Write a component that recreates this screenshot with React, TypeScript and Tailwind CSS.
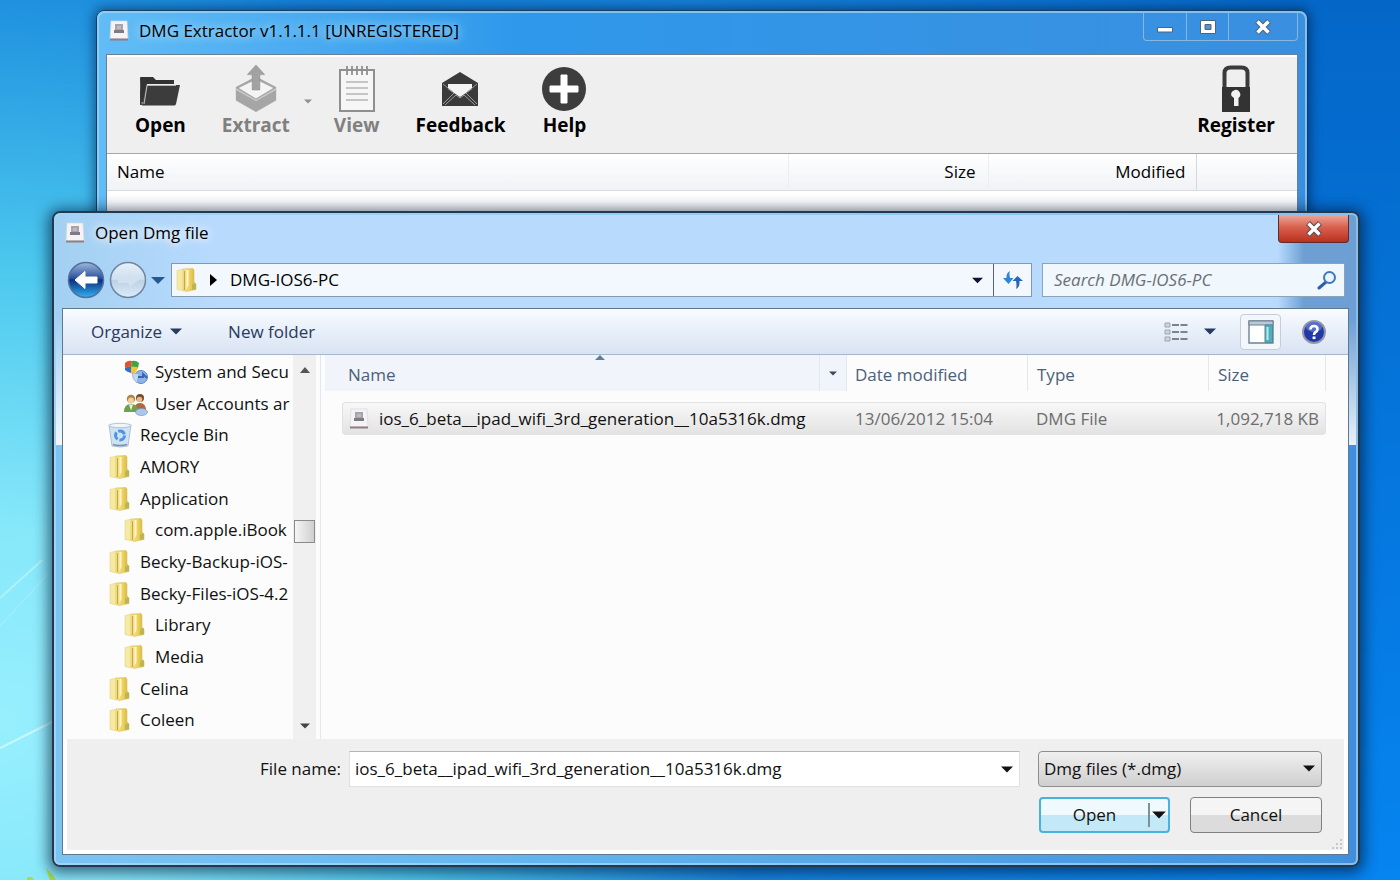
import type { ReactNode } from 'react';

interface TreeItem {
  label: string;
  level: 1 | 2;
  icon: 'folder' | 'system' | 'users' | 'bin';
}

const TREE: TreeItem[] = [
  { label: 'System and Secu', level: 2, icon: 'system' },
  { label: 'User Accounts ar', level: 2, icon: 'users' },
  { label: 'Recycle Bin', level: 1, icon: 'bin' },
  { label: 'AMORY', level: 1, icon: 'folder' },
  { label: 'Application', level: 1, icon: 'folder' },
  { label: 'com.apple.iBook', level: 2, icon: 'folder' },
  { label: 'Becky-Backup-iOS-', level: 1, icon: 'folder' },
  { label: 'Becky-Files-iOS-4.2', level: 1, icon: 'folder' },
  { label: 'Library', level: 2, icon: 'folder' },
  { label: 'Media', level: 2, icon: 'folder' },
  { label: 'Celina', level: 1, icon: 'folder' },
  { label: 'Coleen', level: 1, icon: 'folder' },
];

const FILE_NAME = 'ios_6_beta__ipad_wifi_3rd_generation__10a5316k.dmg';

function DmgIcon() {
  return (
    <svg viewBox="0 0 20 22" className="w-5 h-[22px] shrink-0">
      <path d="M2 1h16l1 18H1z" fill="#f5f3f3" stroke="#d9d9dc" strokeWidth="0.7" />
      <path d="M6 4h8v6H6z" fill="#a4a4ad" />
      <path d="M5 10h10v3H5z" fill="#7b7b88" />
      <path d="M8 6h4v3H8z" fill="#c9b6b8" />
      <path d="M1 18.5h18v2H1z" fill="#8d7f82" />
    </svg>
  );
}

function FolderIcon() {
  return (
    <svg viewBox="0 0 22 26" className="w-[22px] h-[26px] shrink-0">
      <defs>
        <linearGradient id="folderFront" x1="0" x2="1">
          <stop offset="0" stopColor="#f7e793" />
          <stop offset="0.55" stopColor="#ecd05c" />
          <stop offset="1" stopColor="#d6b13c" />
        </linearGradient>
      </defs>
      <path d="M2 3.5 L9 2 L9 24 L2 22.5z" fill="#f6e9a2" stroke="#e3d48c" strokeWidth="0.6" />
      <path d="M8 2 L18 1.5 L19 3 L19 15 L21 17 L21 22.5 L11 24.5 L8 23z" fill="url(#folderFront)" stroke="#d9c15c" strokeWidth="0.6" />
      <path d="M11.5 3 L13.500 3 L13.5 18 L11.5 22z" fill="#fdf6cf" />
      <path d="M9.5 4v19" stroke="#c9a640" strokeWidth="1" />
      <path d="M17 17.5l4-1v5.500l-4 1z" fill="#b9b658" />
    </svg>
  );
}

function SystemIcon() {
  return (
    <svg viewBox="0 0 26 26" className="w-[26px] h-[26px] shrink-0">
      <path d="M2 4 Q5 1 9 2 L8 8 Q5 7 2 9z" fill="#e2522c" />
      <path d="M9 2 Q13 1 16 4 L15 9 Q12 7 8 8z" fill="#3fa53a" />
      <path d="M2 9 Q5 7 8 8 L8 14 Q4 13 2 11z" fill="#2e6fd0" />
      <path d="M8 8 Q12 7 15 9 L13 13 Q10 15 8 14z" fill="#f2c62c" />
      <circle cx="18" cy="18" r="6.5" fill="#8fb4e6" stroke="#5d86c6" />
      <path d="M9 14 l7 1 l-2 9 q-5-4-5-10z" fill="#c6d7ee" stroke="#8aa8d2" strokeWidth="0.7" />
      <path d="M15 18h5v-3l4 4" fill="none" stroke="#3563b8" strokeWidth="1.8" />
    </svg>
  );
}

function UsersIcon() {
  return (
    <svg viewBox="0 0 26 26" className="w-[26px] h-[26px] shrink-0">
      <circle cx="17" cy="7" r="4" fill="#7b4a2a" />
      <circle cx="16.5" cy="8.5" r="2.8" fill="#e9b98b" />
      <path d="M11 20q0-8 6-8t6 8z" fill="#b2673c" />
      <circle cx="8" cy="8" r="4.2" fill="#a98547" />
      <circle cx="8" cy="9.5" r="3" fill="#f1cda4" />
      <path d="M1 21q0-8 7-8t7 8z" fill="#6fa04c" />
      <path d="M6 13.5l2 6 2-6z" fill="#eef2e4" />
      <ellipse cx="18.5" cy="21" rx="6" ry="3.5" fill="#a9c9ea" stroke="#6f97c6" strokeWidth="0.7" />
    </svg>
  );
}

function BinIcon() {
  return (
    <svg viewBox="0 0 24 26" className="w-6 h-[26px] shrink-0">
      <path d="M1 3h22l-3 21q-8 2-16 0z" fill="#cfe2f3" stroke="#9fb6cc" strokeWidth="0.8" />
      <ellipse cx="12" cy="3.5" rx="11" ry="2.2" fill="#eef5fb" stroke="#a5b7ca" strokeWidth="0.8" />
      <circle cx="12" cy="13.5" r="4.5" fill="none" stroke="#4f93df" strokeWidth="3" strokeDasharray="7.500 1.900" />
      <path d="M5 22.500q7 2 14 0" fill="none" stroke="#7892ad" strokeWidth="1.5" />
    </svg>
  );
}

const TREE_ICONS: Record<TreeItem['icon'], ReactNode> = {
  folder: <FolderIcon />,
  system: <SystemIcon />,
  users: <UsersIcon />,
  bin: <BinIcon />,
};

function Caret({ className }: { className: string }) {
  return (
    <svg viewBox="0 0 12 7" className={className} fill="currentColor" aria-hidden="true">
      <path d="M0 0.5h12L6 6.5z" />
    </svg>
  );
}

function ToolButton({ label, disabled, children }: { label: string; disabled?: boolean; children: ReactNode }) {
  return (
    <button
      disabled={disabled}
      className={`flex flex-col items-center text-[19px] leading-6 font-bold ${disabled ? 'text-[#808080]' : 'text-black'}`}
    >
      <span className="h-12 flex items-center justify-center">{children}</span>
      {label}
    </button>
  );
}

function Wallpaper() {
  return (
    <div className="absolute inset-0 bg-linear-to-b from-[#0467c8] to-[#0684f0]">
      <div className="absolute inset-0 bg-linear-to-r from-[#1585dc] from-0% via-[#1a86dc]/80 via-50% to-transparent to-95%" />
      <div className="absolute inset-0 bg-[radial-gradient(ellipse_760px_780px_at_0%_82%,#97effd_0%,#86e8fa_25%,#4cc8ee_58%,transparent_100%)]" />
      <svg viewBox="0 0 60 320" className="absolute left-0 bottom-0 w-[60px] h-80" aria-hidden="true">
        <path d="M0 38L60-16" stroke="#d6f8ff" strokeWidth="2" opacity="0.5" />
        <path d="M0 66L50 12" stroke="#c5f5ff" strokeWidth="1" opacity="0.5" />
        <path d="M0 188L56 160" stroke="#e2fbff" strokeWidth="2" opacity="0.7" />
        <path d="M46 308l6 6 4 6h-6zM27 317l5 0 2 3h-7z" fill="#a8dc4a" />
      </svg>
    </div>
  );
}

function ExtractorWindow() {
  return (
    <section
      aria-label="DMG Extractor"
      className="absolute top-[10px] left-[96px] right-[92px] h-80 flex flex-col rounded-lg border border-[#123f66] bg-linear-to-r from-[#62bdf6] via-[#2f98ea] via-35% to-[#3a8fdf] shadow-[0_0_12px_2px_rgba(0,20,60,0.55)]"
    >
      <div className="flex-1 flex flex-col rounded-lg border-2 border-[#9fd4fa]/70 px-[7px]">
        <header className="flex items-start justify-between h-[41px]">
          <h1 className="flex items-center gap-[10px] h-9 pl-[3px] text-[17px] text-black">
            <DmgIcon />
            <span className="[text-shadow:0_0_8px_#a5dcff,0_0_12px_#a5dcff]">DMG Extractor v1.1.1.1 [UNREGISTERED]</span>
          </h1>
          <div className="flex h-7 rounded-b border border-t-0 border-[#a9c6e2]/70 text-white">
            <button aria-label="Minimize" className="w-[43px] flex items-center justify-center border-r border-[#a9c6e2]/70">
              <svg viewBox="0 0 18 16" className="w-[18px] h-4">
                <path d="M1.5 8.5h15v4.5h-15z" fill="#fff" stroke="#4b6480" />
              </svg>
            </button>
            <button aria-label="Maximize" className="w-[42px] flex items-center justify-center border-r border-[#a9c6e2]/70">
              <svg viewBox="0 0 18 16" className="w-[18px] h-4">
                <path d="M1.5 1.5h15v13h-15z" fill="#fff" stroke="#4b6480" />
                <path d="M6 5.5h6v5H6z" fill="#5f8fc0" stroke="#4b6480" />
              </svg>
            </button>
            <button aria-label="Close" className="w-[68px] flex items-center justify-center">
              <svg viewBox="0 0 18 16" className="w-[18px] h-4">
                <path d="M3 2l12 12M15 2L3 14" stroke="#4b6480" strokeWidth="5.5" />
                <path d="M3.5 2.5l11 11M14.5 2.5l-11 11" stroke="#fff" strokeWidth="3.5" />
              </svg>
            </button>
          </div>
        </header>

        <div className="flex-1 flex flex-col border border-[#6c7f92] bg-white">
          <div className="flex items-start justify-between h-[99px] pt-2 pl-7 pr-[22px] border-b border-[#a5a5a5] border-t-2 border-t-white bg-[#efefef]">
            <div className="flex items-start">
              <ToolButton label="Open">
                <svg viewBox="0 -6 42 38" className="w-[42px] h-[38px]">
                  <path d="M1 2q0-1 1-1h12l3 3h18v4H8L4 26H2z" fill="#333" />
                  <path d="M1 3v26h2L7 9h34l-4 19q-.5 1.5-2 1.500H3" fill="#3c3c3c" />
                  <path d="M5 28L8 9.5H37" fill="none" stroke="#b5b5b5" strokeWidth="1.2" />
                </svg>
              </ToolButton>
              <div className="flex ml-9">
                <ToolButton label="Extract" disabled>
                  <svg viewBox="0 0 44 50" className="w-11 h-12">
                    <path d="M1 23L22 12l21 11v14L22 49 1 37z" fill="#a6a6a6" />
                    <path d="M4 24l18-9 18 9-18 11z" fill="#f4f4f4" />
                    <path d="M1 25l21 12 21-12" fill="none" stroke="#c9c9c9" strokeWidth="1.5" />
                    <path d="M22 0l9 10h-5v16h-8V10h-5z" fill="#a2a2a2" stroke="#8d8d8d" strokeWidth="0.6" />
                  </svg>
                </ToolButton>
                <button aria-label="Extract options" className="ml-[14px] text-[#909090]">
                  <Caret className="w-2 h-[5px]" />
                </button>
              </div>
              <div className="ml-[22px]">
                <ToolButton label="View" disabled>
                  <svg viewBox="0 0 38 48" className="w-[38px] h-12">
                    <path d="M2 5h34v41H2z" fill="#f6f6f6" stroke="#8f8f8f" strokeWidth="2" />
                    <path d="M9 1v9M14 1v9M19 1v9M24 1v9M29 1v9" stroke="#8f8f8f" strokeWidth="1.8" />
                    <path d="M8 17h22M8 23h22M8 29h22M8 35h22" stroke="#b5b5b5" strokeWidth="1.5" />
                  </svg>
                </ToolButton>
              </div>
              <div className="ml-9">
                <ToolButton label="Feedback">
                  <svg viewBox="0 0 38 38" className="w-[38px] h-[38px]">
                    <path d="M1 13L19 2l18 11v23H1z" fill="#3a3a3a" />
                    <path d="M7 14h24v5L19 27 7 19z" fill="#f4f4f4" />
                    <path d="M2 14l11 9L2 34M36 14l-11 9 11 11M4 35l11-10 4 3 4-3 11 10" fill="none" stroke="#9b9b9b" strokeWidth="1" />
                  </svg>
                </ToolButton>
              </div>
              <div className="ml-9">
                <ToolButton label="Help">
                  <svg viewBox="0 0 46 46" className="w-[46px] h-[46px]">
                    <circle cx="23" cy="23" r="22" fill="#3d3d3d" />
                    <path d="M20 9h6v11h11v6H26v11h-6V26H9v-6h11z" fill="#fff" stroke="#fff" strokeWidth="1" />
                  </svg>
                </ToolButton>
              </div>
            </div>
            <ToolButton label="Register">
              <svg viewBox="0 0 30 48" className="w-[30px] h-12">
                <path d="M3.5 24V8q0-5.500 6-5.500h11q6 0 6 5.500v16" fill="none" stroke="#3a3a3a" strokeWidth="4" />
                <path d="M1 22h28v25H1z" fill="#333" />
                <path d="M10.5 31a4.500 4.500 0 1 1 7 2v8h-4.500v-8z" fill="#f2f2f2" />
              </svg>
            </ToolButton>
          </div>
          <table className="w-full table-fixed text-[17px] leading-6 text-black">
            <thead className="bg-linear-to-b from-white to-[#f0f2f5]">
              <tr className="h-9 border-b border-[#d9dbdf]">
                <th className="pl-[10px] text-left font-normal border-r border-[#eceef0]">Name</th>
                <th className="w-[200px] pr-3 text-right font-normal border-r border-[#eceef0]">Size</th>
                <th className="w-[208px] pr-[10px] text-right font-normal border-r border-[#d5d8dc]">Modified</th>
                <th className="w-[101px]" />
              </tr>
            </thead>
          </table>
        </div>
      </div>
    </section>
  );
}

function NavBar() {
  return (
    <div className="flex items-center h-9 pl-[5px]">
      <button aria-label="Back">
        <svg viewBox="0 0 38 38" className="w-[38px] h-[38px]">
          <defs>
            <linearGradient id="navBack" x1="0" y1="0" x2="0" y2="1">
              <stop offset="0" stopColor="#9fb8dc" />
              <stop offset="0.45" stopColor="#2c529c" />
              <stop offset="0.5" stopColor="#0c2f80" />
              <stop offset="1" stopColor="#2fb4f4" />
            </linearGradient>
          </defs>
          <circle cx="19" cy="19" r="17.5" fill="url(#navBack)" stroke="#54719c" strokeWidth="1.5" />
          <path d="M8 19l10-8.500v5.500h12v6H18v5.500z" fill="#fff" stroke="#fff" strokeWidth="1" strokeLinejoin="round" />
        </svg>
      </button>
      <button aria-label="Forward" className="ml-1">
        <svg viewBox="0 0 38 38" className="w-[38px] h-[38px]">
          <defs>
            <linearGradient id="navForward" x1="0" y1="0" x2="0" y2="1">
              <stop offset="0" stopColor="#e6f1fb" />
              <stop offset="0.48" stopColor="#cfdfee" />
              <stop offset="0.52" stopColor="#bdd2e7" />
              <stop offset="1" stopColor="#dcecfa" />
            </linearGradient>
          </defs>
          <circle cx="19" cy="19" r="17.5" fill="url(#navForward)" stroke="#71869f" strokeWidth="1.5" />
          <path d="M30 19l-10-7v4H9v6h11v4z" fill="#d3e1ef" />
        </svg>
      </button>
      <button aria-label="Recent pages" className="ml-1 mr-[6px] text-[#27588f]">
        <Caret className="w-[14px] h-[9px]" />
      </button>
      <div className="flex-1 flex h-[34px] border border-[#8499b0] bg-[#f2f8fe]">
        <div className="flex-1 flex items-center pl-[3px] text-[17px] text-black">
          <FolderIcon />
          <svg viewBox="0 0 7 12" className="w-[7px] h-3 ml-[13px] mr-[13px]">
            <path d="M0 0l7 6-7 6z" fill="#000" />
          </svg>
          DMG-IOS6-PC
        </div>
        <button aria-label="Previous locations" className="w-8 flex items-center justify-center text-[#0b1438]">
          <Caret className="w-[11px] h-[7px]" />
        </button>
        <button aria-label="Refresh" className="w-[38px] flex items-center justify-center border-l border-[#56657a]">
          <svg viewBox="0 0 22 20" className="w-[22px] h-5">
            <path d="M8 1Q4 3 4.500 8H1l5.500 6 5-6H8Q6.500 4 8 1z" fill="#2d86d4" />
            <path d="M14 19q4-2 3.500-8h3.500l-5.500-5-5 5h3.500q1 5 0 8z" fill="#2766b8" />
          </svg>
        </button>
      </div>
      <label className="flex items-center w-[303px] h-[34px] ml-[10px] mr-1 pl-[11px] pr-[7px] border border-[#8da3ba] bg-[#f0f7fd]">
        <input
          type="text"
          aria-label="Search"
          placeholder="Search DMG-IOS6-PC"
          className="flex-1 min-w-0 bg-transparent text-[17px] italic placeholder-[#6a6f76] outline-none"
        />
        <svg viewBox="0 0 20 20" className="w-5 h-5">
          <path d="M9 12l-7 6" stroke="#2f5fa8" strokeWidth="3" strokeLinecap="round" />
          <circle cx="12.5" cy="7.5" r="5.5" fill="#eaf4fd" stroke="#3f78bd" strokeWidth="2" />
        </svg>
      </label>
    </div>
  );
}

function DialogToolbar() {
  return (
    <div className="flex items-center justify-between h-[46px] pl-7 pr-[22px] border-b border-[#a8b6cc] bg-linear-to-b from-[#fafcff] from-0% via-[#e9f0fa] via-45% to-[#d9e3f2] text-[17px] text-[#283a5e]">
      <div className="flex items-center gap-[46px]">
        <button className="flex items-center gap-2">
          Organize
          <Caret className="w-3 h-[7px]" />
        </button>
        <button>New folder</button>
      </div>
      <div className="flex items-center">
        <button className="flex items-center gap-4" aria-label="Change view">
          <svg viewBox="0 0 24 22" className="w-6 h-[22px]">
            <path d="M1 2h5v4H1zM1 9h5v4H1zM1 16h5v4H1z" fill="#cfd6de" stroke="#8d97a2" strokeWidth="0.8" />
            <path d="M8 4h7M16.5 4h7M8 11h7M16.5 11h7M8 18h7M16.5 18h7" stroke="#7a848e" strokeWidth="1.8" />
          </svg>
          <Caret className="w-3 h-[7px]" />
        </button>
        <button aria-label="Preview pane" className="flex items-center justify-center w-[41px] h-9 ml-6 border border-[#c3cddb] rounded-sm bg-[#f3f7fc]">
          <svg viewBox="0 0 26 24" className="w-[26px] h-6">
            <path d="M1 1h24v22H1z" fill="#fdfefe" stroke="#6e8193" strokeWidth="1.4" />
            <path d="M1 1h24v4H1z" fill="#b9c9d8" stroke="#6e8193" />
            <path d="M17 5h7.500v17.500H17z" fill="#4bb0bd" stroke="#5b8795" />
            <path d="M18.5 7h2v13h-2z" fill="#bfe8ea" />
          </svg>
        </button>
        <button aria-label="Help" className="ml-[21px]">
          <svg viewBox="0 0 24 24" className="w-6 h-6">
            <circle cx="12" cy="12" r="11" fill="#2338a8" stroke="#9298a8" strokeWidth="2" />
            <ellipse cx="12" cy="7" rx="8" ry="5" fill="#6a83dc" opacity="0.7" />
            <path d="M8.5 9.5q0-3.500 3.500-3.500t3.500 3.200q0 1.800-2 3-1.500 1-1.500 2.800" fill="none" stroke="#fff" strokeWidth="2.6" />
            <path d="M10.6 16.500h2.900v2.600h-2.900z" fill="#fff" />
          </svg>
        </button>
      </div>
    </div>
  );
}

function FolderTree() {
  return (
    <nav aria-label="Folders" className="flex w-[258px] h-[384px] border-r border-[#e3e8f0] shrink-0">
      <ul className="flex flex-col flex-1 min-w-0 h-[381px] pt-px">
        {TREE.map(item => (
          <li
            key={item.label}
            className={`flex-1 min-h-0 flex items-center whitespace-nowrap text-[17px] text-[#101010] ${item.level === 1 ? 'pl-[45px]' : 'pl-[60px]'}`}
          >
            <span className="w-8 shrink-0">{TREE_ICONS[item.icon]}</span>
            {item.label}
          </li>
        ))}
      </ul>
      <div className="flex flex-col items-center w-[23px] mr-1 pt-3 pb-[10px] bg-[#f0f0f1]">
        <svg viewBox="0 0 10 6" className="w-[10px] h-[6px]">
          <path d="M5 0l5 6H0z" fill="#555" />
        </svg>
        <div className="w-[21px] h-[23px] mt-[147px] mb-auto border border-[#8b8b8b] bg-linear-to-r from-[#f6f6f6] to-[#cfcfcf]" />
        <Caret className="w-[10px] h-[6px] text-[#444]" />
      </div>
    </nav>
  );
}

function FileList() {
  return (
    <div className="flex-1 min-w-0 pl-1 pr-[22px]">
      <table className="w-full table-fixed border-separate border-spacing-0 text-[17px] leading-6">
        <thead>
          <tr className="h-9 text-left text-[#4c607a]">
            <th className="w-[17px] bg-[#f1f5fb]" />
            <th className="relative pt-1 pl-[6px] font-normal bg-[#f1f5fb]">
              Name
              <svg viewBox="0 0 10 5" className="absolute left-1/2 top-0 w-[10px] h-[5px]">
                <path d="M5 0l5 5H0z" fill="#5f7f96" />
              </svg>
              <span className="absolute right-0 inset-y-0 w-7 flex items-center justify-center border-x border-[#e2e8f1] text-[#3a4a5e]">
                <Caret className="w-2 h-[5px]" />
              </span>
            </th>
            <th className="w-[181px] pt-1 pl-2 font-normal border-r border-[#e4e8ee]">Date modified</th>
            <th className="w-[181px] pt-1 pl-[9px] font-normal border-r border-[#e4e8ee]">Type</th>
            <th className="w-[117px] pt-1 pl-[9px] font-normal border-r border-[#e4e8ee]">Size</th>
          </tr>
        </thead>
        <tbody>
          <tr className="h-[11px]">
            <td colSpan={5} />
          </tr>
          <tr className="h-[33px] text-[#6d6d6d]">
            <td />
            <td className="pl-[6px] border border-r-0 border-[#e2e2e2] rounded-l bg-linear-to-b from-[#f8f8f8] to-[#e3e3e3] text-[#111]">
              <span className="flex items-center gap-[10px]">
                <DmgIcon />
                {FILE_NAME}
              </span>
            </td>
            <td className="pl-2 border-y border-[#e2e2e2] bg-linear-to-b from-[#f8f8f8] to-[#e3e3e3]">13/06/2012 15:04</td>
            <td className="pl-2 border-y border-[#e2e2e2] bg-linear-to-b from-[#f8f8f8] to-[#e3e3e3]">DMG File</td>
            <td className="pr-[6px] text-right whitespace-nowrap border border-l-0 border-[#e2e2e2] rounded-r bg-linear-to-b from-[#f8f8f8] to-[#e3e3e3]">1,092,718 KB</td>
          </tr>
        </tbody>
      </table>
    </div>
  );
}

function DialogFooter() {
  return (
    <div className="relative flex flex-col gap-[10px] h-[115px] pt-3 pr-[22px] border-4 border-t-0 border-white bg-[#efefef] text-[17px] text-[#111]">
      <div className="flex items-center">
        <label htmlFor="file-name" className="w-[282px] pr-2 text-right">
          File name:
        </label>
        <div className="flex-1 flex h-9 border border-[#e0e0e0] border-t-[#b4b4b4] bg-white">
          <input id="file-name" type="text" defaultValue={FILE_NAME} className="flex-1 min-w-0 pl-[5px] bg-transparent outline-none" />
          <button aria-label="Show file names" className="w-6 flex items-center justify-center">
            <Caret className="w-3 h-[7px]" />
          </button>
        </div>
        <div className="relative w-[284px] ml-[18px]">
          <select
            aria-label="File type"
            className="w-full h-9 pl-[5px] appearance-none rounded-sm border border-[#8e8e8e] bg-linear-to-b from-[#f0f0f0] to-[#cfcfcf] outline-none"
          >
            <option>Dmg files (*.dmg)</option>
          </select>
          <Caret className="absolute right-[7px] top-[14px] w-3 h-[7px] pointer-events-none" />
        </div>
      </div>
      <div className="flex justify-end gap-5">
        <div className="flex w-[131px] h-9 rounded border-2 border-[#45b3de] bg-linear-to-b from-[#f0fafe] from-50% to-[#c3e8f7] to-50%">
          <button className="flex-1">Open</button>
          <button aria-label="Open options" className="flex items-center justify-center w-5 my-1 border-l-2 border-[#7c9099]">
            <Caret className="w-[14px] h-2" />
          </button>
        </div>
        <button className="w-[132px] h-9 rounded border border-[#808080] bg-linear-to-b from-[#f5f5f5] from-50% to-[#dcdcdc] to-50%">Cancel</button>
      </div>
      <svg viewBox="0 0 12 12" className="absolute right-0 bottom-0 w-3 h-3" aria-hidden="true">
        <path d="M8 1h2v2H8zM4 5h2v2H4zM8 5h2v2H8zM0 9h2v2H0zM4 9h2v2H4zM8 9h2v2H8z" fill="#c4c8ce" />
      </svg>
    </div>
  );
}

function OpenDialog() {
  return (
    <section
      role="dialog"
      aria-label="Open Dmg file"
      className="absolute top-[211px] left-[52px] right-[40px] rounded-lg border-2 border-[#24384e] bg-linear-to-r from-[#7cc4f2] via-[#5fb4ee] via-40% to-[#3f8fdd] shadow-[0_2px_14px_4px_rgba(0,20,50,0.6)]"
    >
      <div className="rounded-md border-2 border-[#b8e0fb]/60 bg-[linear-gradient(to_bottom,transparent_45%,rgba(255,255,255,0.85)_100%),linear-gradient(to_right,#a3d0f2_0,#b7dafd_12%,#b7dafd_94%,#6d9fd4_96%,#6d9fd4_100%)] bg-[length:100%_230px] bg-no-repeat pl-[6px] pr-[7px] pb-2">
        <header className="flex items-start justify-between h-[47px]">
          <h2 className="flex items-center gap-[10px] h-9 pl-[3px] text-[17px] text-black">
            <DmgIcon />
            <span className="[text-shadow:0_0_8px_#ffffff,0_0_12px_#ffffff]">Open Dmg file</span>
          </h2>
          <button
            aria-label="Close"
            className="flex items-center justify-center w-[71px] h-7 rounded-b border border-t-0 border-[#5f2a2a] bg-linear-to-b from-[#eba699] from-0% via-[#d9604e] via-45% to-[#b8301c]"
          >
            <svg viewBox="0 0 18 16" className="w-[18px] h-4">
              <path d="M3 2l12 12M15 2L3 14" stroke="#5c4a4e" strokeWidth="5.5" />
              <path d="M3.5 2.5l11 11M14.5 2.5l-11 11" stroke="#fff" strokeWidth="3.3" />
            </svg>
          </button>
        </header>
        <NavBar />
        <div className="mt-[10px] border border-[#5f7890] bg-[#fcfcfc]">
          <DialogToolbar />
          <div className="flex">
            <FolderTree />
            <FileList />
          </div>
          <DialogFooter />
        </div>
      </div>
    </section>
  );
}

export default function App() {
  return (
    <main className="relative min-h-screen overflow-hidden font-['Open_Sans','Noto_Sans',sans-serif]">
      <Wallpaper />
      <ExtractorWindow />
      <OpenDialog />
    </main>
  );
}
